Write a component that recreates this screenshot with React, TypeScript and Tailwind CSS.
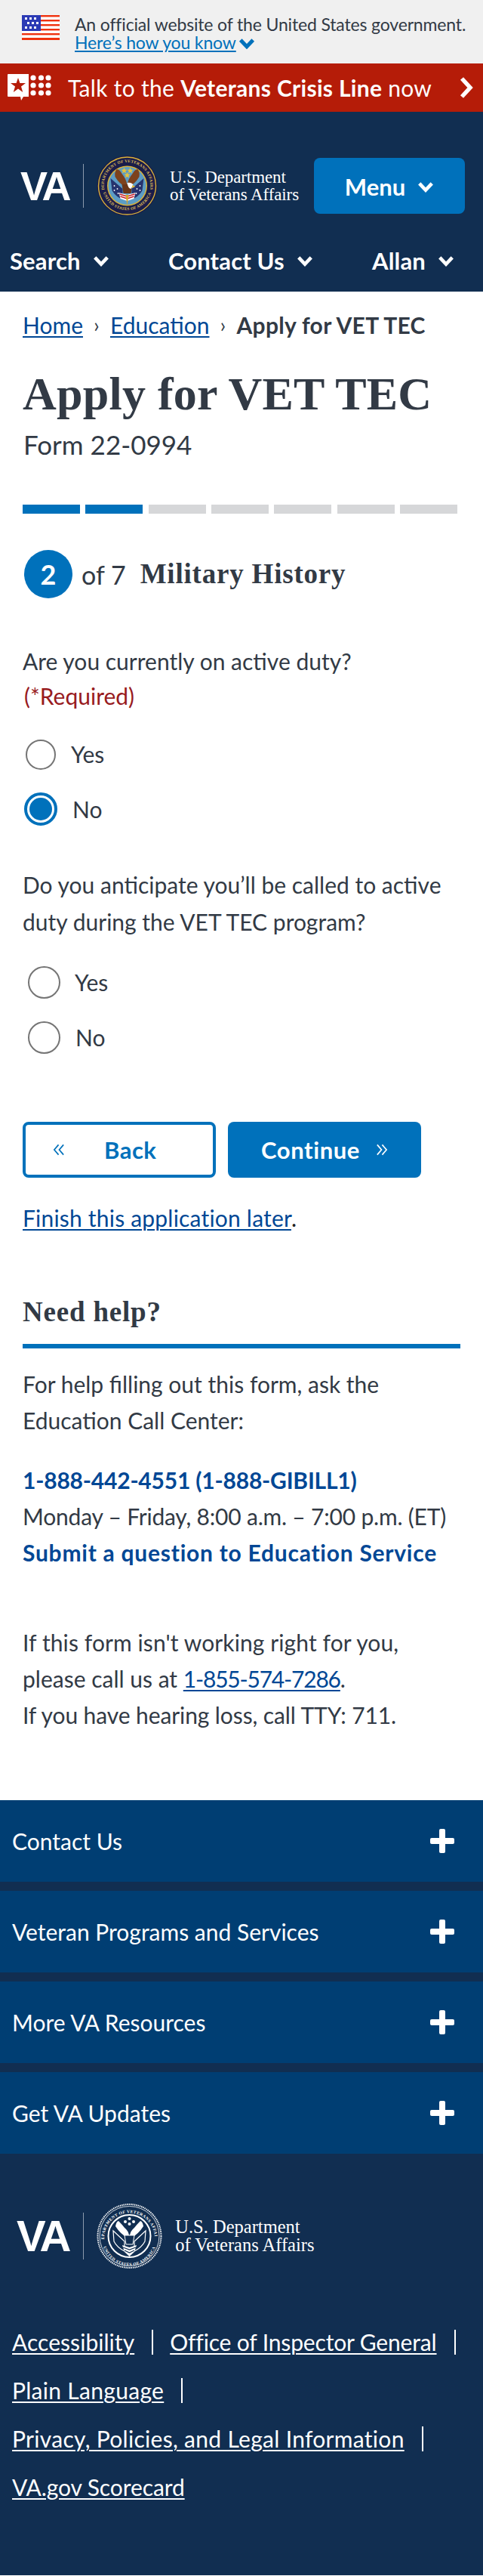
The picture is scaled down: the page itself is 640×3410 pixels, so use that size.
import React from "react";

const Chevron = ({ className, w = 5 }: { className: string; w?: number }) => (
  <svg viewBox="0 0 24 16" className={className} fill="none" stroke="currentColor" strokeWidth={w}>
    <path d="M3 3 L12 12.5 L21 3" />
  </svg>
);

const Flag = () => (
  <svg viewBox="0 0 50 33" className="h-[33px] w-[50px] shrink-0">
    <rect width="50" height="33" fill="#fff" />
    {[0, 6, 12, 18, 24, 30].map((y) => (
      <rect key={y} x="0" y={y} width="50" height={y === 30 ? 3 : 2.4} fill="#f0320f" />
    ))}
    <rect width="25" height="21" fill="#2b3ab5" />
    {[
      [4, 3], [10, 3], [16, 3],
      [7, 9], [13, 9], [19, 9],
      [4, 15], [10, 15], [16, 15],
    ].map(([x, y]) => (
      <rect key={`${x}-${y}`} x={x} y={y} width="3" height="3" fill="#fff" />
    ))}
  </svg>
);

const CrisisIcon = () => (
  <svg viewBox="0 0 58 36" className="h-[36px] w-[58px] shrink-0">
    <path d="M0 1 Q0 0 1 0 H28 V30 H21 L18 35 L17 30 H1 Q0 30 0 29 Z" fill="#fff" />
    <path d="M14 5 L16.4 12 L24 12 L18 16.5 L20.2 24 L14 19.5 L7.8 24 L10 16.5 L4 12 L11.6 12 Z" fill="#b51c08" />
    {[5, 15, 25].map((y) =>
      [34, 44.5, 54].map((x) => <circle key={`${x}-${y}`} cx={x} cy={y} r="3.6" fill="#fff" />)
    )}
  </svg>
);

const ColorSeal = () => (
  <svg viewBox="0 0 80 80" className="h-[80px] w-[81px] shrink-0 overflow-visible">
    <defs>
      <path id="sealTop" d="M9.5 44 A30.8 30.8 0 1 1 70.5 44" />
      <path id="sealBottom" d="M7 44 A33.4 33.4 0 0 0 73 44" />
    </defs>
    <circle cx="40" cy="40" r="40" fill="#1a1d4a" />
    <circle cx="40" cy="40" r="38" fill="none" stroke="#d8b23a" strokeWidth="1.4" />
    <circle cx="40" cy="40" r="26.5" fill="#d8b23a" />
    <circle cx="40" cy="40" r="25" fill="#5c9cc5" />
    <text fontSize="5.2" fontWeight="700" fill="#e5c55a" fontFamily="'Liberation Serif',serif" letterSpacing="0.35">
      <textPath href="#sealTop" startOffset="50%" textAnchor="middle">DEPARTMENT OF VETERANS AFFAIRS</textPath>
    </text>
    <text fontSize="5.2" fontWeight="700" fill="#e5c55a" fontFamily="'Liberation Serif',serif" letterSpacing="0.35">
      <textPath href="#sealBottom" startOffset="50%" textAnchor="middle">UNITED STATES OF AMERICA</textPath>
    </text>
    <path d="M18 30 L34 44 L34 58 Q24 54 20 46 Z" fill="#26336e" />
    <path d="M62 30 L46 44 L46 58 Q56 54 60 46 Z" fill="#26336e" />
    {[[23, 40], [27, 44], [23, 46], [28, 50], [57, 40], [53, 44], [57, 46], [52, 50]].map(([x, y]) => (
      <circle key={`${x}-${y}`} cx={x} cy={y} r="0.9" fill="#fff" />
    ))}
    <path d="M38 41 Q30 38 24 28 Q23 22 26 18 Q30 18 33 24 Q38 30 40 38 Z" fill="#7d421d" />
    <path d="M42 41 Q50 38 56 28 Q57 22 54 18 Q50 18 47 24 Q42 30 40 38 Z" fill="#7d421d" />
    <path d="M33 38 H47 L45 50 H35 Z" fill="#6a3618" />
    <path d="M40 36 Q46 35 48 39 L45 44 Q41 43 40 36 Z" fill="#fff" />
    <path d="M47 39 L51 41 L46 43 Z" fill="#e2b93b" />
    <path d="M29 49 L40 52 L51 49 L49 57 L40 60 L31 57 Z" fill="#fff" />
    <path d="M30 51 L40 54 L50 51 M31 54 L40 57 L49 54" stroke="#c8202b" strokeWidth="1.6" fill="none" />
    <path d="M38 52 L40 66 L42 52 Z" fill="#d8a62a" />
    <path d="M40 14 l1.2 2.6 2.8.2-2.2 1.8.8 2.8-2.6-1.6-2.6 1.6.8-2.8-2.2-1.8 2.8-.2z" fill="#e8c33a" transform="translate(-4 2)" />
    <path d="M40 14 l1.2 2.6 2.8.2-2.2 1.8.8 2.8-2.6-1.6-2.6 1.6.8-2.8-2.2-1.8 2.8-.2z" fill="#e8c33a" transform="translate(4 2)" />
    <path d="M40 14 l1.2 2.6 2.8.2-2.2 1.8.8 2.8-2.6-1.6-2.6 1.6.8-2.8-2.2-1.8 2.8-.2z" fill="#e8c33a" transform="translate(0 8)" />
  </svg>
);

const WhiteSeal = () => (
  <svg viewBox="0 0 87 86" className="h-[86px] w-[87px] shrink-0 overflow-visible">
    <defs>
      <path id="footTop" d="M10 46 A33.5 33.5 0 1 1 77 46" />
      <path id="footBottom" d="M7 46 A36.5 36.5 0 0 0 80 46" />
    </defs>
    <circle cx="43.5" cy="43" r="42" fill="none" stroke="#fff" strokeWidth="2" strokeDasharray="1.4 1" />
    <circle cx="43.5" cy="43" r="39.5" fill="none" stroke="#fff" strokeWidth="0.8" />
    <circle cx="43.5" cy="43" r="28" fill="none" stroke="#fff" strokeWidth="2" />
    <text fontSize="5.6" fontWeight="700" fill="#fff" fontFamily="'Liberation Serif',serif" letterSpacing="0.4">
      <textPath href="#footTop" startOffset="50%" textAnchor="middle">DEPARTMENT OF VETERANS AFFAIRS</textPath>
    </text>
    <text fontSize="5.6" fontWeight="700" fill="#fff" fontFamily="'Liberation Serif',serif" letterSpacing="0.4">
      <textPath href="#footBottom" startOffset="50%" textAnchor="middle">UNITED STATES OF AMERICA</textPath>
    </text>
    <path d="M41 45 Q32 41 25 30 Q26 24 29 23 Q34 28 37 32 Q42 36 43 42 Z" fill="#fff" />
    <path d="M46 45 Q55 41 62 30 Q61 24 58 23 Q53 28 50 32 Q45 36 44 42 Z" fill="#fff" />
    <path d="M22 36 L37 50 L37 63 Q27 58 23 50 Z" fill="none" stroke="#fff" strokeWidth="1.2" />
    <path d="M65 36 L50 50 L50 63 Q60 58 64 50 Z" fill="none" stroke="#fff" strokeWidth="1.2" />
    <path d="M37 42 H50 L48 54 H39 Z" fill="#112e51" stroke="#fff" strokeWidth="1" />
    <path d="M34 55 L43.5 58 L53 55 L50 64 L43.5 70 L37 64 Z" fill="#fff" />
    <path d="M35 58 L43.5 61 L52 58 M37 62 L43.5 65 L50 62" stroke="#112e51" strokeWidth="1.2" fill="none" />
    {[[38, 24], [43.5, 20], [49, 24], [43.5, 27]].map(([x, y]) => (
      <circle key={`${x}-${y}`} cx={x} cy={y} r="2" fill="#fff" />
    ))}
  </svg>
);

const Radio = ({ size, mode }: { size: string; mode?: boolean }) =>
  mode ? (
    <span className="flex h-[44px] w-[44px] shrink-0 items-center justify-center rounded-full border-[4px] border-[#0071bb] bg-white">
      <span className="h-[30px] w-[30px] rounded-full bg-[#0071bb]" />
    </span>
  ) : (
    <span className={`${size} shrink-0 rounded-full border-2 border-[#757575] bg-white`} />
  );

const Plus = () => (
  <svg viewBox="0 0 32 32" className="h-[32px] w-[32px] shrink-0" fill="#fff">
    <rect x="12" y="0" width="8" height="32" rx="2" />
    <rect x="0" y="12" width="32" height="8" rx="2" />
  </svg>
);

const AccordionRow = ({ label }: { label: string }) => (
  <div className="mb-[12px] flex h-[108px] items-center justify-between bg-[#003e73] pl-[16px] pr-[38px] text-[30px] text-white">
    <span>{label}</span>
    <Plus />
  </div>
);

const FooterLink = ({ label, bar = true, track = "tracking-[0.05px]" }: { label: string; bar?: boolean; track?: string }) => (
  <div className="flex h-[64px] items-center">
    <a className={`${track} text-[30px] text-white underline decoration-2 underline-offset-[3px]`}>{label}</a>
    {bar && <span className="ml-[23px] mr-[22px] h-[33px] w-[2px] bg-white" />}
  </div>
);

const linkClass = "text-[#004795] underline decoration-2 underline-offset-[3px]";

export default function App() {
  return (
    <div className="w-[640px] bg-white font-[Lato,sans-serif] text-[#323a45]">
      {/* gov banner */}
      <div className="flex h-[84px] bg-[#f0f0f0] pl-[29px] pt-[20px]">
        <Flag />
        <div className="ml-[20px] text-[23px] leading-[24px] tracking-[-0.15px]">
          <p className="whitespace-nowrap">An official website of the United States government.</p>
          <p className="flex items-center text-[#0071bb]">
            <a className="underline decoration-2 underline-offset-[2px]">Here’s how you know</a>
            <Chevron className="ml-[3px] mt-[3px] h-[15px] w-[22px]" w={5.5} />
          </p>
        </div>
      </div>

      {/* crisis line */}
      <div className="flex h-[64px] items-center justify-between bg-[#b51c08] pl-[10px] pr-[13px] text-white">
        <div className="flex items-center">
          <CrisisIcon />
          <p className="ml-[22px] whitespace-nowrap text-[30px] tracking-[0.3px]">
            Talk to the <b className="font-bold">Veterans Crisis Line</b> now
          </p>
        </div>
        <svg viewBox="0 0 18 28" className="h-[28px] w-[18px]" fill="none" stroke="#fff" strokeWidth="5.5">
          <path d="M3 2 L14 14 L3 26" />
        </svg>
      </div>

      {/* header */}
      <div className="h-[238px] bg-[#112e51] text-white">
        <div className="flex items-center pl-[27px] pr-[24px] pt-[58px]">
          <span className="font-['Liberation_Sans',sans-serif] text-[54px] font-bold leading-[80px] tracking-[-3.5px]">VA</span>
          <span className="ml-[19px] h-[58px] w-px bg-[#8c9aad]" />
          <span className="ml-[17px]"><ColorSeal /></span>
          <div className="ml-[16px] font-['Liberation_Serif',serif] text-[23px] leading-[23px] tracking-[-0.1px] whitespace-nowrap">
            <p>U.S. Department</p>
            <p>of Veterans Affairs</p>
          </div>
          <button className="ml-auto flex h-[74px] w-[200px] items-center justify-center gap-[16px] rounded-[8px] bg-[#0071bb] pt-[2px] text-[31px] font-bold">
            Menu
            <Chevron className="h-[15px] w-[22px]" w={5} />
          </button>
        </div>
        <div className="mt-[36px] flex items-center justify-between pl-[13px] pr-[38px] text-[31px] font-bold">
          {["Search", "Contact Us", "Allan"].map((t) => (
            <span key={t} className="flex items-center gap-[16px] tracking-[0.15px]">
              {t}
              <Chevron className="h-[15px] w-[22px]" w={5} />
            </span>
          ))}
        </div>
      </div>

      {/* main */}
      <main className="px-[30px]">
        <nav className="mt-[20px] flex h-[48px] items-center whitespace-nowrap text-[30px] leading-[48px]">
          <a className={linkClass}>Home</a>
          <span className="w-[36px] text-center text-[26px]">›</span>
          <a className={linkClass}>Education</a>
          <span className="w-[36px] text-center text-[26px]">›</span>
          <b className="font-bold tracking-[0.3px]">Apply for VET TEC</b>
        </nav>

        <h1 className="mt-[31px] whitespace-nowrap font-['Liberation_Serif',serif] text-[62px] font-bold leading-[72px] tracking-[0.25px]">
          Apply for VET TEC
        </h1>
        <p className="mt-[7px] pl-[1px] text-[35px] leading-[48px]">Form 22-0994</p>

        <div className="mt-[56px] flex gap-[7.33px] pr-[4px]">
          <span className="h-[12px] w-[76px] bg-[#0071bb]" />
          <span className="h-[12px] w-[76px] bg-[#0071bb]" />
          <span className="h-[12px] w-[76px] bg-[#d6d7d9]" />
          <span className="h-[12px] w-[76px] bg-[#d6d7d9]" />
          <span className="h-[12px] w-[76px] bg-[#d6d7d9]" />
          <span className="h-[12px] w-[76px] bg-[#d6d7d9]" />
          <span className="h-[12px] w-[76px] bg-[#d6d7d9]" />
        </div>

        <div className="mt-[48px] flex h-[64px] items-center pl-[2px]">
          <span className="flex h-[64px] w-[64px] items-center justify-center rounded-full bg-[#0071bb] text-[36px] font-bold text-white">2</span>
          <span className="ml-[12px] text-[34px]">of 7</span>
          <h2 className="ml-[19px] font-['Liberation_Serif',serif] text-[37px] font-bold tracking-[0.8px]">Military History</h2>
        </div>

        <p className="mt-[59px] text-[30px] leading-[48px]">Are you currently on active duty?</p>
        <p className="-mt-px pl-[2px] text-[30px] leading-[47px] text-[#981b1e]">(*Required)</p>

        <div className="mt-[34px] flex h-[40px] items-center pl-[4px] text-[30px]">
          <Radio size="h-[40px] w-[40px]" />
          <span className="ml-[20px] -mt-[2px]">Yes</span>
        </div>
        <div className="mt-[30px] flex h-[44px] items-center pl-[2px] text-[30px]">
          <Radio size="" mode />
          <span className="ml-[20px]">No</span>
        </div>

        <p className="mt-[54px] text-[30px] leading-[49px]">
          Do you anticipate you’ll be called to active duty during the VET TEC program?
        </p>

        <div className="mt-[34px] flex h-[43px] items-center pl-[7px] text-[30px]">
          <Radio size="h-[43px] w-[43px]" />
          <span className="ml-[19px]">Yes</span>
        </div>
        <div className="mt-[30px] flex h-[43px] items-center pl-[7px] text-[30px]">
          <Radio size="h-[43px] w-[43px]" />
          <span className="ml-[20px]">No</span>
        </div>

        <div className="mt-[90px] flex gap-[16px]">
          <button className="flex h-[74px] w-[256px] items-center rounded-[8px] border-[4px] border-[#0071bb] bg-white pl-[36px] text-[31px] font-bold tracking-[0.5px] text-[#0071bb]">
            <svg viewBox="0 0 18 16" className="h-[16px] w-[17px]" fill="none" stroke="currentColor" strokeWidth="1.8">
              <path d="M8 1 L2 8 L8 15 M15 1 L9 8 L15 15" />
            </svg>
            <span className="ml-[51px]">Back</span>
          </button>
          <button className="flex h-[74px] w-[256px] items-center rounded-[8px] bg-[#0071bb] pl-[44px] text-[31px] font-bold tracking-[0.6px] text-white">
            <span>Continue</span>
            <svg viewBox="0 0 18 16" className="ml-[20px] h-[16px] w-[17px]" fill="none" stroke="currentColor" strokeWidth="1.8">
              <path d="M3 1 L9 8 L3 15 M10 1 L16 8 L10 15" />
            </svg>
          </button>
        </div>

        <p className="mt-[29px] text-[30px] leading-[48px] tracking-[0.2px] text-[#212121]">
          <a className={linkClass}>Finish this application later</a>.
        </p>

        <h2 className="mt-[77px] font-['Liberation_Serif',serif] text-[37px] font-bold leading-[48px] tracking-[0.8px]">Need help?</h2>
        <div className="mt-[18px] h-[6px] w-[580px] bg-[#0071bb]" />

        <p className="mt-[23px] text-[30px] leading-[48px]">
          For help filling out this form, ask the<br />Education Call Center:
        </p>
        <div className="mt-[31px] text-[30px] leading-[48px]">
          <p className="font-bold tracking-[-0.2px] text-[#004795]">1-888-442-4551 (1-888-GIBILL1)</p>
          <p className="tracking-[-0.2px]">Monday – Friday, 8:00 a.m. – 7:00 p.m. (ET)</p>
          <p className="font-bold tracking-[0.75px] text-[#004795]">Submit a question to Education Service</p>
        </div>
        <p className="mb-[89px] mt-[71px] text-[30px] leading-[48px]">
          <span className="tracking-[0.1px]">If this form isn't working right for you,</span><br />
          please call us at <a className={`${linkClass} tracking-[-1.2px]`}>1-855-574-7286</a>.<br />
          <span className="tracking-[-0.1px]">If you have hearing loss, call TTY: 711.</span>
        </p>
      </main>

      {/* footer */}
      <footer className="h-[1026px] bg-[#112e51] text-white">
        <AccordionRow label="Contact Us" />
        <AccordionRow label="Veteran Programs and Services" />
        <AccordionRow label="More VA Resources" />
        <AccordionRow label="Get VA Updates" />
        <div className="mt-[66px] flex h-[86px] items-center pl-[22px]">
          <span className="font-['Liberation_Sans',sans-serif] text-[58px] font-bold leading-[80px] tracking-[-4px]">VA</span>
          <span className="ml-[20px] h-[62px] w-px bg-[#8c9aad]" />
          <span className="ml-[17px]"><WhiteSeal /></span>
          <div className="ml-[17px] font-['Liberation_Serif',serif] text-[24.5px] leading-[24px] whitespace-nowrap">
            <p>U.S. Department</p>
            <p>of Veterans Affairs</p>
          </div>
        </div>
        <div className="mt-[65px] flex flex-wrap pl-[16px]">
          <FooterLink label="Accessibility" />
          <FooterLink label="Office of Inspector General" track="tracking-[-0.15px]" />
          <FooterLink label="Plain Language" track="tracking-[0.3px]" />
          <FooterLink label="Privacy, Policies, and Legal Information" track="tracking-[0.3px]" />
          <FooterLink label="VA.gov Scorecard" bar={false} track="tracking-[-0.1px]" />
        </div>
      </footer>
    </div>
  );
}
